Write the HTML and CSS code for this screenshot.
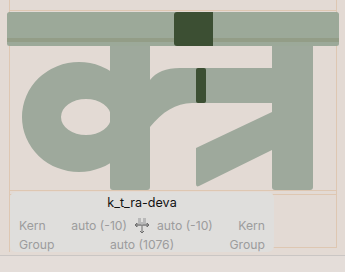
FILE: index.html
```html
<!DOCTYPE html>
<html lang="en">
<head>
<meta charset="UTF-8">
<meta name="viewport" content="width=device-width, initial-scale=1.0">
<title>k_t_ra-deva</title>
<link rel="stylesheet" href="styles.css">
</head>
<body>
<main class="editor">
  <div class="canvas">
    <svg class="glyph" width="345" height="255" viewBox="0 0 345 255">
      <!-- metric lines -->
      <g class="metrics">
        <line x1="9.5" y1="0" x2="9.5" y2="252"/>
        <line x1="336.5" y1="0" x2="336.5" y2="248"/>
        <line x1="9" y1="10.5" x2="337" y2="10.5"/>
        <line x1="9" y1="190.5" x2="337" y2="190.5"/>
        <line x1="9" y1="194.5" x2="337" y2="194.5"/>
        <line x1="273" y1="247.5" x2="337" y2="247.5"/>
      </g>
      <!-- glyph -->
      <g class="shape">
        <path fill-rule="evenodd" d="M79,62 A57,55 0 1 0 79,172 A57,55 0 1 0 79,62 Z M86,99 A25,18 0 1 1 86,135 A25,18 0 1 1 86,99 Z"/>
        <path d="M110,46 H150 V187 Q150,190 147,190 H113 Q110,190 110,187 Z"/>
        <path d="M150,80 C156,72 166,68 180,68 H272 V103 H192 C176,103 162,112 150,127 Z"/>
        <path d="M272,46 H313 V187 Q313,190 310,190 H275 Q272,190 272,187 Z"/>
        <path d="M196,148 L272,112 V150 L199,186 Q196,187.5 196,184 Z"/>
      </g>
      <rect class="node" x="196" y="68" width="10" height="35" rx="2"/>
      <!-- headline bar -->
      <rect class="bar" x="7" y="12" width="332" height="34" rx="2.5"/>
      <rect class="bar-line" x="7" y="38" width="332" height="4"/>
      <path class="node" d="M177,12 H213 V46 H177 Q174,46 174,43 V15 Q174,12 177,12 Z"/>
    </svg>

    <section class="info">
      <div class="info-title">k_t_ra-deva</div>
      <div class="info-row kern">
        <div class="side"><span>Kern</span><span>auto (-10)</span></div>
        <svg class="kern-icon" width="18" height="18" viewBox="0 0 18 18">
          <path class="h" d="M5,1 H8 V5 H10 V1 H13 V9 H10 V7 H8 V9 H5 Z"/>
          <path class="arr" d="M2,8 H16 M2,8 L4,6 M2,8 L4,10 M16,8 L14,6 M16,8 L14,10 M4,6 V10 M14,6 V10 M9,8 V16 M7,14 L9,16 L11,14"/>
        </svg>
        <div class="side"><span>auto (-10)</span><span>Kern</span></div>
      </div>
      <div class="info-row group">
        <span>Group</span>
        <span>auto (1076)</span>
        <span>Group</span>
      </div>
    </section>
  </div>
  <div class="footer"></div>
</main>
</body>
</html>
```

FILE: styles.css
```css
body {
  margin: 0;
  background: #e3dad4;
  font-family: Inter, "Noto Sans", sans-serif;
}
.editor {
  width: 345px;
  height: 272px;
  overflow: hidden;
}
.canvas {
  position: relative;
  height: 255px;
}
.glyph {
  display: block;
}
.metrics line {
  stroke: #dec7b2;
  stroke-width: 1;
}
.shape path {
  fill: #9ea99c;
}
.node {
  fill: #3c4f33;
}
.bar {
  fill: #9aa797;
  fill-opacity: 0.97;
}
.bar-line {
  fill: #939d87;
}

.info {
  position: absolute;
  left: 10px;
  top: 192px;
  width: 264px;
  height: 60px;
  box-sizing: border-box;
  padding: 2px 9px 0;
  background: #dfdedc;
  border-radius: 6px;
  font-size: 12.2px;
  color: #9c9c9c;
}
.info-title {
  text-align: center;
  color: #111;
  font-size: 12.6px;
  line-height: 18px;
  margin-bottom: 4px;
}
.info-row {
  height: 19px;
  line-height: 19px;
}
.kern {
  display: grid;
  grid-template-columns: 1fr 18px 1fr;
  column-gap: 6px;
  align-items: center;
}
.side {
  display: flex;
  justify-content: space-between;
}
.kern-icon .h {
  fill: #b9b9b9;
}
.kern-icon .arr {
  fill: none;
  stroke: #6e6e6e;
  stroke-width: 1;
}
.group {
  display: flex;
  justify-content: space-between;
}
.footer {
  height: 17px;
  border-top: 1px solid #cac6c4;
  background: #e4ddd9;
}
```
